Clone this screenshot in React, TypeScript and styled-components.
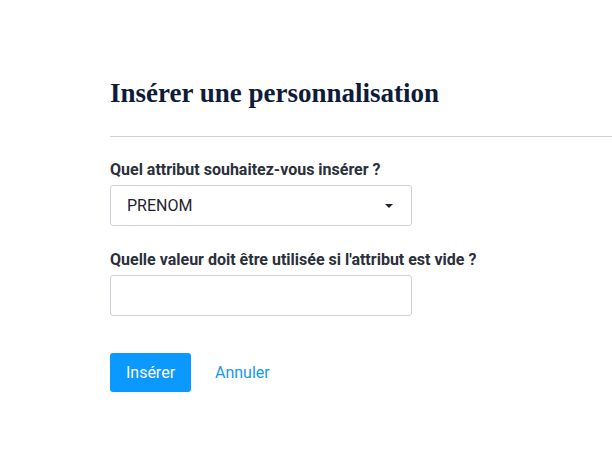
import React, { useState } from 'react'
import styled, { createGlobalStyle } from 'styled-components'

const GlobalStyle = createGlobalStyle`
  html, body {
    margin: 0;
    padding: 0;
    background: #ffffff;
  }
  body {
    font-family: Roboto, 'Liberation Sans', Arial, sans-serif;
  }
`

const Page = styled.div`
  width: 612px;
  height: 465px;
  box-sizing: border-box;
  padding: 75px 0 0 110px;
  overflow: hidden;
`

const Title = styled.h1`
  margin: 0;
  font-family: 'Liberation Serif', 'Times New Roman', serif;
  font-weight: 700;
  font-size: 27px;
  line-height: 36px;
  color: #0e1c3a;
`

const Divider = styled.hr`
  margin: 25px 0 23px 0;
  border: 0;
  border-top: 1px solid #c9d0da;
`

const Form = styled.form`
  display: flex;
  flex-direction: column;
  gap: 24px;
  width: 302px;
`

const Field = styled.div`
  display: flex;
  flex-direction: column;
  gap: 5px;
`

const Label = styled.label`
  font-size: 16px;
  line-height: 20px;
  font-weight: 700;
  color: #2b303b;
  white-space: nowrap;
`

const SelectBox = styled.div`
  height: 41px;
  box-sizing: border-box;
  border: 1px solid #cbd2dc;
  border-radius: 3px;
  display: flex;
  align-items: center;
  padding: 0 16px;
  font-size: 16px;
  color: #1f2430;
`

const Caret = styled.span`
  margin-left: auto;
  margin-right: 2px;
  width: 0;
  height: 0;
  border-left: 4px solid transparent;
  border-right: 4px solid transparent;
  border-top: 4px solid #1f2430;
`

const TextInput = styled.input`
  height: 41px;
  box-sizing: border-box;
  border: 1px solid #cbd2dc;
  border-radius: 3px;
  padding: 0 16px;
  font-family: inherit;
  font-size: 16px;
  outline: none;
`

const Actions = styled.div`
  display: flex;
  align-items: center;
  gap: 24px;
  margin-top: 13px;
`

const PrimaryButton = styled.button`
  height: 39px;
  width: 81px;
  border: 0;
  border-radius: 3px;
  background: #0c99ff;
  color: #ffffff;
  font-family: inherit;
  font-size: 16px;
  cursor: pointer;
`

const LinkButton = styled.button`
  border: 0;
  background: none;
  padding: 0;
  color: #1597f5;
  font-family: inherit;
  font-size: 16px;
  cursor: pointer;
`

export default function App() {
  const [fallback, setFallback] = useState('')

  return (
    <>
      <GlobalStyle />
      <Page>
        <Title>Insérer une personnalisation</Title>
        <Divider />
        <Form onSubmit={(e) => e.preventDefault()}>
          <Field>
            <Label>Quel attribut souhaitez-vous insérer ?</Label>
            <SelectBox>
              PRENOM
              <Caret />
            </SelectBox>
          </Field>
          <Field>
            <Label>Quelle valeur doit être utilisée si l'attribut est vide ?</Label>
            <TextInput value={fallback} onChange={(e) => setFallback(e.target.value)} />
          </Field>
          <Actions>
            <PrimaryButton type="submit">Insérer</PrimaryButton>
            <LinkButton type="button">Annuler</LinkButton>
          </Actions>
        </Form>
      </Page>
    </>
  )
}
